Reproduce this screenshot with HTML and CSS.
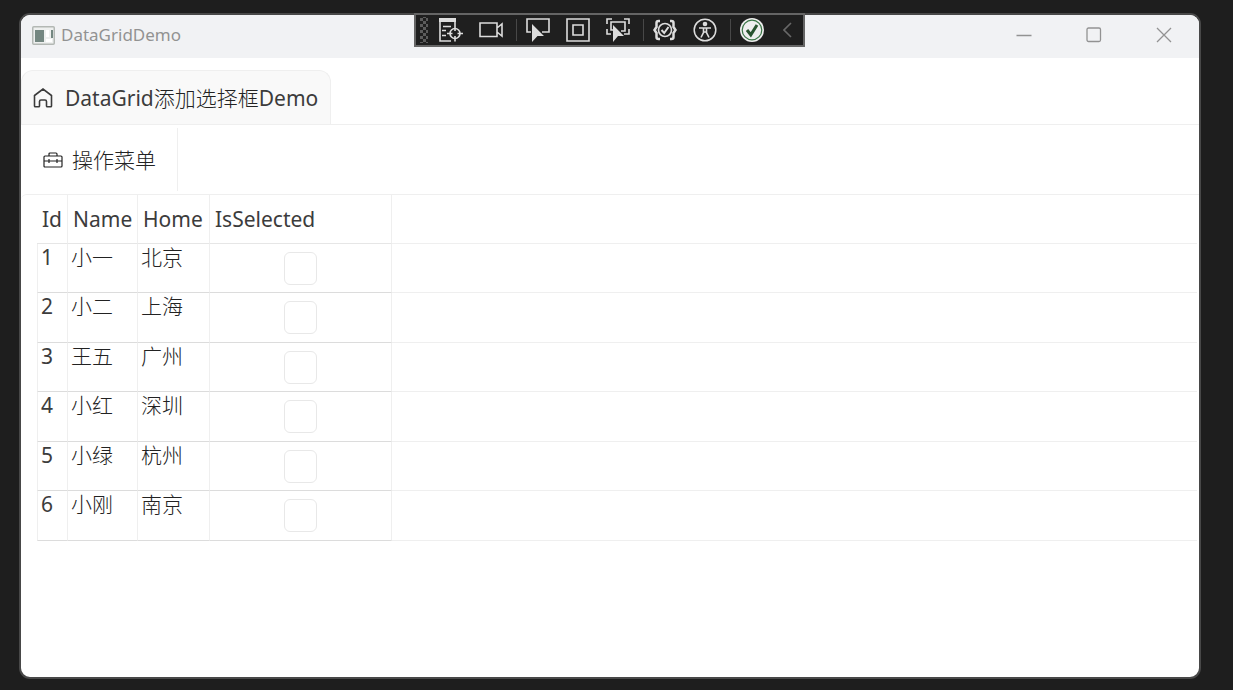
FILE: index.html
```html
<!doctype html>
<html lang="zh-CN">
<head>
	<meta charset="utf-8">
	<meta name="viewport" content="width=device-width, initial-scale=1">
	<title>DataGridDemo</title>
	<link rel="stylesheet" href="styles.css">
</head>
<body>
	<div class="window">
		<header class="title-bar">
			<svg class="app-icon" aria-hidden="true" viewBox="0 0 23 19">
				<rect x="0.75" y="0.75" width="21.5" height="17.5" rx="1" fill="#eef0ef" stroke="#b3b8b4" stroke-width="1.5" />
				<rect x="3" y="4" width="9" height="12" fill="#748781" stroke="none" />
				<rect x="14" y="4" width="3" height="7" fill="#fff" stroke="none" />
				<rect x="14" y="13" width="6" height="3" fill="#fff" stroke="none" />
				<rect x="19" y="4" width="2" height="8" fill="#748781" stroke="none" />
			</svg>
			<span class="title">DataGridDemo</span>
			<div class="window-controls">
				<button type="button" aria-label="最小化">
					<svg aria-hidden="true" viewBox="0 0 16 16"><path d="M0.500 8.500H15.500" /></svg>
				</button>
				<button type="button" aria-label="最大化">
					<svg aria-hidden="true" viewBox="0 0 16 16"><rect x="1" y="1" width="13.500" height="13.500" rx="1.500" /></svg>
				</button>
				<button type="button" aria-label="关闭">
					<svg aria-hidden="true" viewBox="0 0 16 16"><path d="M1 1l14 14M15 1L1 15" /></svg>
				</button>
			</div>
		</header>

		<nav class="tabs">
			<a class="tab" href="#demo" aria-current="page">
				<svg class="home-icon" aria-hidden="true" viewBox="0 0 20 20">
					<path d="M1.500 7.500L10 1l8.500 6.500V18q0 .8-.8.8h-3.400q-.8 0-.8-.8v-4.500q0-1.500-1.500-1.500H8q-1.500 0-1.500 1.500V18q0 .8-.8.8H2.300q-.8 0-.8-.8z" />
				</svg>
				<span>DataGrid<span class="cjk">添加选择框</span>Demo</span>
			</a>
		</nav>

		<div class="menu-bar">
			<button class="menu-item cjk" type="button">
				<svg class="toolbox-icon" aria-hidden="true" viewBox="0 0 20 16">
					<path d="M2 4h16q1 0 1 1v9q0 1-1 1H2q-1 0-1-1V5q0-1 1-1zM6 4V2q0-1 1-1h6q1 0 1 1v2M1 9h18M6 7v4M14 7v4" />
				</svg>
				操作菜单
			</button>
		</div>

		<main class="grid-panel" id="demo">
			<table class="data-grid">
				<colgroup>
					<col class="col-id">
					<col class="col-name">
					<col class="col-home">
					<col class="col-selected">
					<col>
				</colgroup>
				<thead>
					<tr><th scope="col">Id</th><th scope="col">Name</th><th scope="col">Home</th><th scope="col">IsSelected</th><td></td></tr>
				</thead>
				<tbody>
					<tr><td>1</td><td class="cjk">小一</td><td class="cjk">北京</td><td class="check"><input type="checkbox" aria-label="选择 小一"></td><td></td></tr>
					<tr><td>2</td><td class="cjk">小二</td><td class="cjk">上海</td><td class="check"><input type="checkbox" aria-label="选择 小二"></td><td></td></tr>
					<tr><td>3</td><td class="cjk">王五</td><td class="cjk">广州</td><td class="check"><input type="checkbox" aria-label="选择 王五"></td><td></td></tr>
					<tr><td>4</td><td class="cjk">小红</td><td class="cjk">深圳</td><td class="check"><input type="checkbox" aria-label="选择 小红"></td><td></td></tr>
					<tr><td>5</td><td class="cjk">小绿</td><td class="cjk">杭州</td><td class="check"><input type="checkbox" aria-label="选择 小绿"></td><td></td></tr>
					<tr><td>6</td><td class="cjk">小刚</td><td class="cjk">南京</td><td class="check"><input type="checkbox" aria-label="选择 小刚"></td><td></td></tr>
				</tbody>
			</table>
		</main>
	</div>

	<!-- floating debug toolbar -->
	<div class="debug-bar" role="toolbar" aria-label="调试工具栏">
		<span class="grip"></span>
		<button type="button" aria-label="实时可视化树">
			<svg aria-hidden="true" viewBox="0 0 24 24">
				<path d="M0 0h17v4H0z" fill="#ddd" stroke="none" />
				<path d="M1 4v19h11M16 4v4M4 8.500h8M3 12.500h4M3 17.500h4" />
				<circle cx="16" cy="15.500" r="5" />
				<path d="M16 8v5M16 18v5.500M8 15.500h5.500M18.500 15.500H24" />
			</svg>
		</button>
		<button type="button" aria-label="录制">
			<svg aria-hidden="true" viewBox="0 0 24 24"><path d="M1 5h17v13.500H1zM18 10l5-4v12l-5-4" /></svg>
		</button>
		<span class="separator"></span>
		<button type="button" aria-label="选择元素">
			<svg aria-hidden="true" viewBox="0 0 24 24">
				<path d="M5 14H1V1h22v13h-7" />
				<path d="M6 6l12 12h-6.500L6 24z" fill="#ddd" stroke="none" />
			</svg>
		</button>
		<button type="button" aria-label="显示布局装饰器">
			<svg aria-hidden="true" viewBox="0 0 24 24"><path d="M1 1h22v22H1zM7 7h10v10H7z" /></svg>
		</button>
		<button type="button" aria-label="跟踪焦点元素">
			<svg aria-hidden="true" viewBox="0 0 24 24">
				<path d="M1 6V1h5M18 1h5v5M23 11v5h-5M1 11v5h4M7 12H5V4h14v9h-4" />
				<path d="M7 7l11 11h-6l-5 6z" fill="#ddd" stroke="none" />
			</svg>
		</button>
		<span class="separator"></span>
		<button type="button" aria-label="绑定失败">
			<svg aria-hidden="true" viewBox="0 0 24 24">
				<path d="M7 3H5.500Q3.500 3 3.500 5v4L1.500 12l2 3v4q0 2 2 2H7M17 3h1.500q2 0 2 2v4l2 3-2 3v4q0 2-2 2H17" stroke-width="2.500" />
				<circle cx="12" cy="12" r="6.500" /><path d="M8.500 12l2.700 3 4.300-6" stroke-width="2" />
			</svg>
		</button>
		<button type="button" aria-label="辅助功能">
			<svg aria-hidden="true" viewBox="0 0 24 24">
				<circle cx="12" cy="12" r="10.800" stroke-width="1.500" />
				<circle cx="12" cy="6" r="2.300" fill="#ddd" stroke="none" />
				<path d="M6 10h12M10.500 10v4.500L8 19.500M13.500 10v4.500l2.500 5M10.500 14h3" />
			</svg>
		</button>
		<span class="separator"></span>
		<button type="button" aria-label="热重载">
			<svg aria-hidden="true" viewBox="0 0 24 24">
				<circle cx="12" cy="12" r="12" fill="#eee" stroke="none" />
				<circle cx="12" cy="12" r="9.800" stroke="#397545" stroke-width="1.200" />
				<path d="M7 12l3.800 4.800L17 7" stroke="#28532f" stroke-width="3" />
			</svg>
		</button>
		<button class="collapse" type="button" aria-label="折叠">
			<svg aria-hidden="true" viewBox="0 0 9 16"><path d="M8 1L1 8l7 7" /></svg>
		</button>
	</div>
</body>
</html>
```

FILE: styles.css
```css
:root {
	box-sizing: border-box;
	--desktop: #1e1e1e;
	--frame: #484848;
	--line: #efefef;
	--row-line: #dcdcdc;
	--text: #3c3c3c;
}

*,
*::after,
*::before {
	box-sizing: inherit;
}

body {
	background: var(--desktop);
	color: var(--text);
	display: flex;
	font: 21px/28px "Noto Sans", "Noto Sans CJK SC", sans-serif;
	margin: 0;
	min-height: 100vh;
	padding: 13px 32px 11px 19px;
	position: relative;
}

button {
	background: none;
	border: 0;
	color: inherit;
	cursor: pointer;
	font: inherit;
	margin: 0;
	padding: 0;
}

svg {
	display: block;
	fill: none;
	flex: none;
	stroke: currentColor;
}

.cjk {
	color: #222;
	font-weight: 300;
}

.window {
	background: #fff;
	border: 2px solid var(--frame);
	border-radius: 11px;
	display: flex;
	flex: 1;
	flex-direction: column;
	min-width: 0;
	overflow: hidden;
}

.title-bar {
	align-items: center;
	background: #f1f2f4;
	color: #929292;
	display: flex;
	gap: 6px;
	height: 43px;
	padding: 0 0 3px 11px;
}

.app-icon {
	height: 19px;
	width: 23px;
}

.title {
	font-size: 17px;
}

.window-controls {
	display: flex;
	margin-left: auto;
}

.window-controls button {
	align-items: center;
	display: flex;
	height: 40px;
	justify-content: center;
	width: 70px;
}

.window-controls svg {
	height: 16px;
	stroke-width: 1.3;
	width: 16px;
}

.tabs {
	border-bottom: 1px solid var(--line);
	display: flex;
	padding-top: 12px;
}

.tab {
	align-items: center;
	background: #f9f9f9;
	border: 1px solid var(--line);
	border-bottom: 0;
	border-radius: 12px 12px 0 0;
	color: inherit;
	display: flex;
	gap: 12px;
	height: 54px;
	padding: 0 12px 0 11px;
	text-decoration: none;
}

.home-icon {
	height: 20px;
	stroke-width: 1.6;
	width: 20px;
}

.menu-bar {
	display: flex;
	height: 69px;
	padding: 3px 0;
}

.menu-item {
	align-items: center;
	border-right: 1px solid var(--line);
	display: flex;
	gap: 9px;
	padding: 0 21px 0 22px;
}

.toolbox-icon {
	height: 16px;
	stroke-width: 1.2;
	width: 20px;
}

.grid-panel {
	border-radius: 6px 0 0 0;
	border-top: 1px solid var(--line);
	flex: 1;
	padding: 0 2px 0 16px;
}

.data-grid {
	border-collapse: separate;
	border-spacing: 0;
	table-layout: fixed;
	width: 100%;
}

.col-id {
	width: 31px;
}

.col-name {
	width: 70px;
}

.col-home {
	width: 72px;
}

.col-selected {
	width: 182px;
}

.data-grid th,
.data-grid td {
	border-bottom: 1px solid var(--row-line);
	border-right: 1px solid var(--line);
	padding: 0 0 0 3px;
	text-align: left;
	vertical-align: top;
	white-space: nowrap;
}

.data-grid th {
	border-bottom-color: #e6e6e6;
	font-weight: 400;
	height: 49px;
	padding-left: 5px;
	vertical-align: middle;
}

.data-grid tbody td {
	height: 49px;
	line-height: 26px;
}

.data-grid tbody tr:nth-child(even) td {
	height: 50px;
}

.data-grid tbody td:first-child {
	border-left: 1px solid var(--line);
}

.data-grid td:last-child {
	border-bottom-color: var(--line);
	border-right: 0;
}

.data-grid .check {
	padding: 0;
	text-align: center;
	vertical-align: middle;
}

.check input {
	appearance: none;
	background: #fff;
	border: 1px solid #e8e8e8;
	border-radius: 6px;
	display: block;
	height: 33px;
	margin: 0 auto;
	width: 33px;
}

.check input:checked {
	background: #326cf3;
}

.debug-bar {
	align-items: center;
	background: #1f1f1f;
	border: 2px solid #656565;
	color: #ddd;
	display: flex;
	height: 34px;
	left: 414px;
	position: absolute;
	top: 13px;
	width: 391px;
}

.debug-bar button {
	align-items: center;
	display: flex;
	flex: none;
	height: 30px;
	justify-content: center;
	width: 40px;
}

.debug-bar svg {
	height: 24px;
	stroke-width: 1.6;
	width: 24px;
}

.grip {
	background:
		conic-gradient(#5c5c5c 25%, transparent 0) 0 -2px / 6px 6px,
		conic-gradient(#5c5c5c 25%, transparent 0) 3px 1px / 6px 6px;
	height: 26px;
	margin: 0 3px 0 4px;
	width: 8px;
}

.separator {
	background: #484848;
	height: 22px;
	margin: 0 1px 0 5px;
	width: 1px;
}

.debug-bar .collapse {
	color: #686868;
	flex: 1;
}

.debug-bar .collapse svg {
	height: 16px;
	width: 9px;
}
```
